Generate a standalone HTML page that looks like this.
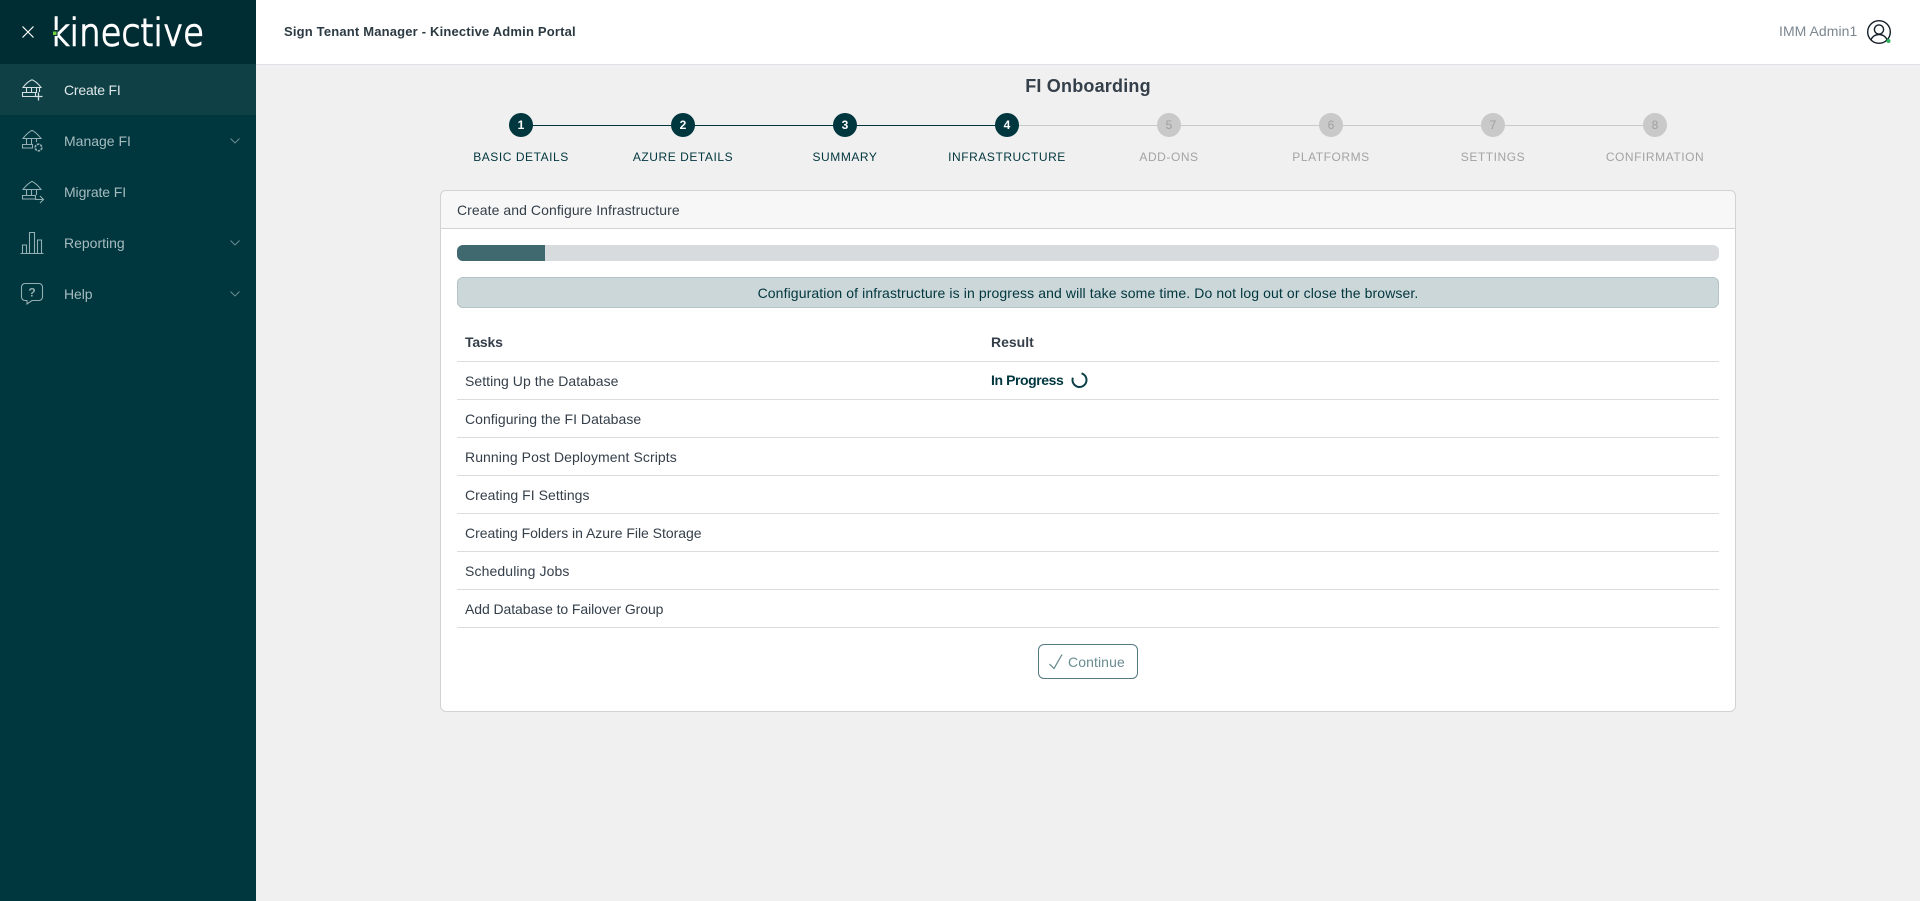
<!DOCTYPE html>
<html lang="en">
<head>
<meta charset="utf-8">
<title>Sign Tenant Manager - Kinective Admin Portal</title>
<style>
*{box-sizing:border-box}
html,body{margin:0;padding:0;width:1920px;height:901px;overflow:hidden;background:#f0f0f0;font-family:"Liberation Sans",Arial,sans-serif;font-size:14px;color:#343a40}
.abs,.t{position:absolute}
.t{white-space:nowrap;line-height:20px}
#side{position:absolute;left:0;top:0;width:256px;height:901px;background:#00363e}
#brand{position:absolute;left:0;top:0;width:256px;height:64px;background:#002c34}
#act{position:absolute;left:0;top:64px;width:256px;height:51px;background:#0f4046}
.nav{color:#a6bcbf;left:64px;letter-spacing:-.1px}
#hdr{position:absolute;left:256px;top:0;width:1664px;height:65px;background:#fff;border-bottom:1px solid #dee2e6}
.circle{position:absolute;top:113px;width:24px;height:24px;border-radius:50%;background:#00363e;color:#fff;font-size:12px;font-weight:bold;line-height:24px;text-align:center}
.circle.off{background:#c9c9c9;color:#a0a0a0;font-weight:normal}
.lab{position:absolute;top:147px;width:162px;text-align:center;font-size:12px;letter-spacing:.55px;line-height:20px;color:#00363e;white-space:nowrap}
.lab.off{color:#a3a3a3}
#card{position:absolute;left:440px;top:190px;width:1296px;height:522px;background:#fff;border:1px solid #d2d2d2;border-radius:6px}
#cardh{position:absolute;left:0;top:0;width:1294px;height:38px;background:#f7f7f7;border-bottom:1px solid #d2d2d2;border-radius:6px 6px 0 0}
.line{position:absolute;left:457px;width:1262px;height:1px;background:#dcdcdc}
.row{left:465px;color:#343f4a;letter-spacing:.04px}
</style>
</head>
<body>
<div id="side">
  <div id="brand"></div>
  <div id="act"></div>
  <svg class="abs" style="left:0;top:0" width="256" height="320" viewBox="0 0 256 320" fill="none">
    <path d="M22.500 26.500 33.500 37.500M33.500 26.500 22.500 37.500" stroke="#fff" stroke-width="1.200"/>
    <text x="50" y="45.300" font-family="DejaVu Sans" font-weight="200" font-size="37" fill="#fff" stroke="#fff" stroke-width="1.500" textLength="154" lengthAdjust="spacingAndGlyphs">kinective</text>
    <rect x="52" y="30" width="5.500" height="6" fill="#002c34"/>
    <rect x="53" y="31.500" width="3.500" height="3.500" fill="#6fcf3f"/>
    <!-- Create FI -->
    <g stroke="#d3dfe0" stroke-width="1.100">
      <path d="M23 87.500Q27 82 32 79.800Q37 82 41 87.500ZM26.500 88v5M31.500 88v5M36.500 88v5M39.500 88v4M22.500 92.500h13v4h-13Z"/>
      <path d="M38.500 92.500v8M34.500 96.500h8" stroke-width="1.300"/>
    </g>
    <!-- Manage FI -->
    <g stroke="#94afb2" stroke-width="1.100">
      <path d="M23 138.500Q27 133 32 130.300Q37 133 41 138.500ZM26.500 139v5M31.500 139v5M36.500 139v3M22.500 144.500h10v3.500h-10Z"/>
      <circle cx="38.500" cy="147.500" r="3.300" stroke-width="1.700" stroke-dasharray="2.500 .95"/>
    </g>
    <!-- Migrate FI -->
    <g stroke="#94afb2" stroke-width="1.100">
      <path d="M23 189.500Q27 184 32 181.300Q37 184 41 189.500ZM26.500 190v5M31.500 190v5M36.500 190v5M22.500 195.500h13v3.500h-13ZM35 199.500h8M40 196l3.500 3.500-3.500 3.500"/>
    </g>
    <!-- Reporting -->
    <g stroke="#94afb2" stroke-width="1.100">
      <path d="M20.500 253.500h23M22.500 253v-8h4v8M29.500 253v-20.500h5V253M37.500 253v-13h4v13"/>
    </g>
    <!-- Help -->
    <path d="M25 283.500h14a3.500 3.500 0 0 1 3.500 3.500v10a3.500 3.500 0 0 1-3.500 3.500h-7L27 304v-3.500h-2a3.500 3.500 0 0 1-3.500-3.500v-10a3.500 3.500 0 0 1 3.500-3.500Z" stroke="#94afb2" stroke-width="1.100"/>
    <text x="32" y="296.500" font-family="Liberation Sans" font-weight="bold" font-size="12" fill="#94afb2" text-anchor="middle">?</text>
    <!-- chevrons -->
    <g stroke="#6f9296" stroke-width=".9">
      <path d="M230.500 138.500 235 143l4.500-4.500M230.500 240.500 235 245l4.500-4.500M230.500 291.500 235 296l4.500-4.500"/>
    </g>
  </svg>
  <div class="t nav" style="top:80px;color:#dfe8e9;letter-spacing:-.2px">Create FI</div>
  <div class="t nav" style="top:131px;letter-spacing:.0px">Manage FI</div>
  <div class="t nav" style="top:182px">Migrate FI</div>
  <div class="t nav" style="top:233px;letter-spacing:0">Reporting</div>
  <div class="t nav" style="top:284px">Help</div>
</div>

<div id="hdr"></div>
<div class="t" style="left:284px;top:22px;font-size:13px;font-weight:bold;color:#2b3a42;letter-spacing:.18px">Sign Tenant Manager - Kinective Admin Portal</div>
<div class="t" style="left:1779px;top:21px;color:#7b8791;letter-spacing:.05px">IMM Admin1</div>
<svg class="abs" style="left:1864px;top:18px" width="30" height="30" viewBox="0 0 30 30" fill="none">
  <circle cx="15" cy="14" r="11.300" stroke="#16202a" stroke-width="1.400"/>
  <circle cx="15" cy="11.500" r="4.600" stroke="#16202a" stroke-width="1.400"/>
  <path d="M6.800 22c1.500-3.500 4.500-5.500 8.200-5.500s6.700 2 8.200 5.500" stroke="#16202a" stroke-width="1.400"/>
  <circle cx="24.500" cy="23" r="2" fill="#2cb45a"/>
</svg>

<div class="t" style="left:0;top:76px;width:2176px;text-align:center;font-size:18px;font-weight:bold;color:#343f4a;letter-spacing:.2px">FI Onboarding</div>

<div class="abs" style="left:521px;top:125px;width:486px;height:1px;background:#00363e"></div>
<div class="abs" style="left:1007px;top:125px;width:648px;height:1px;background:#c9c9c9"></div>

<div class="circle" style="left:509px">1</div>
<div class="circle" style="left:671px">2</div>
<div class="circle" style="left:833px">3</div>
<div class="circle" style="left:995px">4</div>
<div class="circle off" style="left:1157px">5</div>
<div class="circle off" style="left:1319px">6</div>
<div class="circle off" style="left:1481px">7</div>
<div class="circle off" style="left:1643px">8</div>
<div class="lab" style="left:440px">BASIC DETAILS</div>
<div class="lab" style="left:602px">AZURE DETAILS</div>
<div class="lab" style="left:764px">SUMMARY</div>
<div class="lab" style="left:926px">INFRASTRUCTURE</div>
<div class="lab off" style="left:1088px">ADD-ONS</div>
<div class="lab off" style="left:1250px">PLATFORMS</div>
<div class="lab off" style="left:1412px">SETTINGS</div>
<div class="lab off" style="left:1574px">CONFIRMATION</div>

<div id="card"><div id="cardh"></div></div>
<div class="t" style="left:457px;top:200px;color:#343f4a;letter-spacing:.07px">Create and Configure Infrastructure</div>

<div class="abs" style="left:457px;top:245px;width:1262px;height:16px;border-radius:6px;background:#d7dbde;overflow:hidden"><div style="width:88px;height:16px;background:#40686f"></div></div>
<div class="abs" style="left:457px;top:277px;width:1262px;height:31px;border-radius:6px;background:#ccd7d9;border:1px solid #b3c4c6"></div>
<div class="t" style="left:457px;top:283px;width:1262px;text-align:center;color:#00363e;letter-spacing:.11px">Configuration of infrastructure is in progress and will take some time. Do not log out or close the browser.</div>

<div class="t" style="left:465px;top:332px;font-weight:bold;color:#343f4a;letter-spacing:-.2px">Tasks</div>
<div class="t" style="left:991px;top:332px;font-weight:bold;color:#343f4a">Result</div>
<div class="line" style="top:361px"></div>
<div class="line" style="top:399px"></div>
<div class="line" style="top:437px"></div>
<div class="line" style="top:475px"></div>
<div class="line" style="top:513px"></div>
<div class="line" style="top:551px"></div>
<div class="line" style="top:589px"></div>
<div class="line" style="top:627px"></div>
<div class="t row" style="top:371px">Setting Up the Database</div>
<div class="t row" style="top:409px">Configuring the FI Database</div>
<div class="t row" style="top:447px;letter-spacing:.08px">Running Post Deployment Scripts</div>
<div class="t row" style="top:485px">Creating FI Settings</div>
<div class="t row" style="top:523px;letter-spacing:-.02px">Creating Folders in Azure File Storage</div>
<div class="t row" style="top:561px;letter-spacing:.12px">Scheduling Jobs</div>
<div class="t row" style="top:599px;letter-spacing:-.08px">Add Database to Failover Group</div>
<div class="t" style="left:991px;top:370px;font-weight:bold;color:#00363e;letter-spacing:-.42px">In Progress</div>
<svg class="abs" style="left:1070px;top:370px" width="20" height="20" viewBox="0 0 20 20" fill="none"><path d="M11.500 3.300A7 7 0 1 1 2.900 7.700" stroke="#0b3f47" stroke-width="2"/></svg>

<div class="abs" style="left:1038px;top:644px;width:100px;height:35px;border:1px solid #527a80;border-radius:6px;background:#fff"></div>
<svg class="abs" style="left:1047px;top:651px" width="18" height="20" viewBox="0 0 18 20" fill="none"><path d="M2.500 13 7 17.500 15 3.500" stroke="#5f8489" stroke-width="1.200"/></svg>
<div class="t" style="left:1068px;top:652px;color:#6a8c91;letter-spacing:.1px">Continue</div>
</body>
</html>
